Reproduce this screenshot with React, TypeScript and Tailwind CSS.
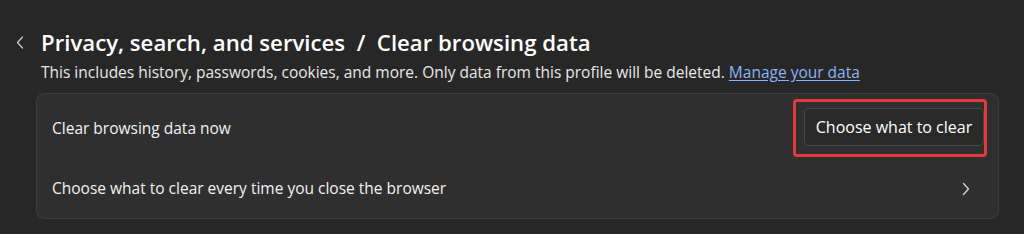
import React from "react";

function ChevronLeft() {
  return (
    <svg width="8" height="13" viewBox="0 0 8 13" fill="none" className="block">
      <path d="M6.5 1 L1.5 6.5 L6.5 12" stroke="#cfcfcf" strokeWidth="1.2" strokeLinecap="round" strokeLinejoin="round" />
    </svg>
  );
}

function ChevronRight() {
  return (
    <svg width="8" height="14" viewBox="0 0 8 14" fill="none" className="block">
      <path d="M1.5 1.5 L6.5 7 L1.5 12.5" stroke="#d6d6d6" strokeWidth="1.3" strokeLinecap="round" strokeLinejoin="round" />
    </svg>
  );
}

export default function App() {
  return (
    <div
      className="h-[234px] w-[1024px] overflow-hidden bg-[#272727] text-[#f2f2f2]"
      style={{ fontFamily: '"Open Sans", "Noto Sans", sans-serif' }}
    >
      <div className="flex pl-[14px] pt-[27px]">
        <div className="flex w-[27px] justify-start pl-[2px] pt-[9px]">
          <ChevronLeft />
        </div>
        <div>
          <h1 className="text-[22.2px] font-semibold leading-[32px] text-white">
            Privacy, search, and services&nbsp;&nbsp;/&nbsp;&nbsp;Clear browsing data
          </h1>
          <p className="mt-[1px] text-[15.5px] leading-[24px] text-[#e8e8e8]">
            This includes history, passwords, cookies, and more. Only data from this profile will be deleted.{" "}
            <a href="#" className="text-[#8ab4f8] underline underline-offset-2">
              Manage your data
            </a>
          </p>
        </div>
      </div>

      <div className="ml-[36px] mr-[25px] mt-[9px] rounded-[8px] border border-[#3c3c3c] bg-[#2f2f2f]">
        <div className="flex h-[65px] items-center justify-between pl-[15px] pr-[14px]">
          <span className="pt-[4px] text-[15.5px]">Clear browsing data now</span>
          <div className="relative">
            <button className="h-[38px] w-[180px] rounded-[5px] border border-[#474747] bg-[#2a2a2a] text-[16px] text-white">
              Choose what to clear
            </button>
            <div className="pointer-events-none absolute -left-[11px] -right-[3px] -top-[9px] -bottom-[11px] rounded-[4px] border-[3px] border-[#e5383f]" />
          </div>
        </div>
        <div className="flex h-[59px] items-center justify-between pl-[15px] pr-[28px]">
          <span className="text-[15.5px]">Choose what to clear every time you close the browser</span>
          <ChevronRight />
        </div>
      </div>
    </div>
  );
}
